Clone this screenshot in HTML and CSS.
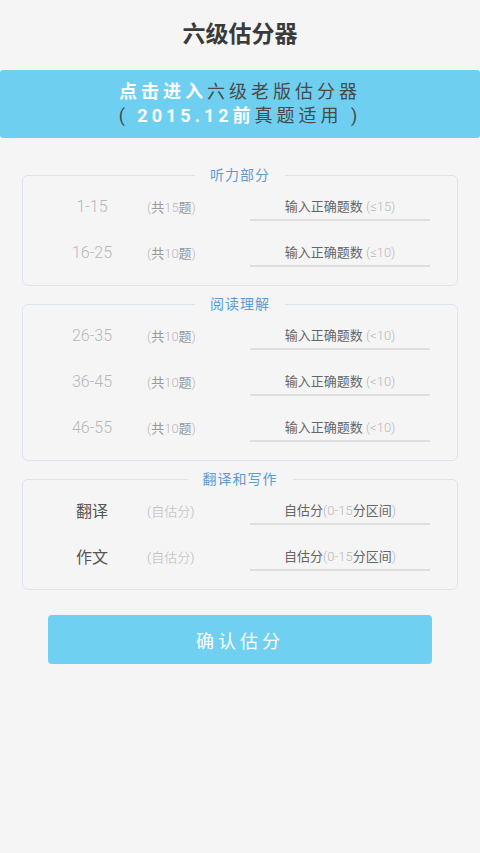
FILE: index.html
```html
<!DOCTYPE html>
<html lang="zh-CN">
<head>
    <meta charset="UTF-8">
    <meta name="viewport" content="width=device-width, initial-scale=1.0">
    <title>六级估分器</title>
    <link rel="stylesheet" href="styles.css">
</head>
<body>
    <header class="title">六级估分器</header>

    <div class="banner">
        <div><span class="hl">点击进入</span>六级老版估分器</div>
        <div>( <span class="hl">2015.12前</span>真题适用 )</div>
    </div>

    <div class="sections">
        <fieldset class="part">
            <legend>听力部分</legend>
            <div class="row">
                <span class="label num">1-15</span>
                <span class="note">(<b>共</b>15<b>题</b>)</span>
                <div class="field">输入正确题数 <span class="hint">(≤15)</span></div>
            </div>
            <div class="row">
                <span class="label num">16-25</span>
                <span class="note">(<b>共</b>10<b>题</b>)</span>
                <div class="field">输入正确题数 <span class="hint">(≤10)</span></div>
            </div>
        </fieldset>

        <fieldset class="part">
            <legend>阅读理解</legend>
            <div class="row">
                <span class="label num">26-35</span>
                <span class="note">(<b>共</b>10<b>题</b>)</span>
                <div class="field">输入正确题数 <span class="hint">(&lt;10)</span></div>
            </div>
            <div class="row">
                <span class="label num">36-45</span>
                <span class="note">(<b>共</b>10<b>题</b>)</span>
                <div class="field">输入正确题数 <span class="hint">(&lt;10)</span></div>
            </div>
            <div class="row">
                <span class="label num">46-55</span>
                <span class="note">(<b>共</b>10<b>题</b>)</span>
                <div class="field">输入正确题数 <span class="hint">(&lt;10)</span></div>
            </div>
        </fieldset>

        <fieldset class="part">
            <legend>翻译和写作</legend>
            <div class="row">
                <span class="label">翻译</span>
                <span class="note">(自估分)</span>
                <div class="field">自估分<span class="hint">(0-15</span>分区间<span class="hint">)</span></div>
            </div>
            <div class="row">
                <span class="label">作文</span>
                <span class="note">(自估分)</span>
                <div class="field">自估分<span class="hint">(0-15</span>分区间<span class="hint">)</span></div>
            </div>
        </fieldset>
    </div>

    <button class="submit">确认估分</button>
</body>
</html>
```

FILE: styles.css
```css
body {
    margin: 0;
    background-color: #f5f5f5;
    font-family: "Roboto", "Noto Sans CJK SC", sans-serif;
    color: #333;
}

.title {
    height: 70px;
    line-height: 70px;
    text-align: center;
    font-size: 23px;
    font-weight: bold;
    color: #3a3a3a;
}

/* blue banner */
.banner {
    background-color: #6ecff1;
    border-radius: 3px;
    padding: 10px 0;
    text-align: center;
    font-size: 18px;
    line-height: 24px;
    letter-spacing: 4px;
    color: #4a4a4a;
}

.banner .hl {
    color: #fff;
    font-weight: bold;
}

.sections {
    padding: 0 22px;
    margin-top: 29px;
}

.part {
    margin: 0 0 10px;
    padding: 0 0 10px;
    border: 1px solid #dce3ec;
    border-radius: 6px;
    min-width: 0;
}

.part legend {
    margin: 0 auto;
    padding: 0 15px;
    font-size: 14px;
    line-height: 16px;
    color: #5d9bd3;
    letter-spacing: 1px;
}

.row {
    display: flex;
    align-items: center;
    height: 46px;
}

.label {
    width: 80px;
    margin-left: 29px;
    text-align: center;
    font-size: 16px;
    color: #555;
}

.label.num {
    font-weight: 300;
    color: #b8b8b8;
}

.note {
    margin-left: 15px;
    width: 103px;
    font-size: 13px;
    font-weight: 300;
    color: #b8b8b8;
}

.note b {
    font-weight: normal;
    color: #999;
}

.field {
    width: 180px;
    margin-top: 6px;
    line-height: 20px;
    padding-bottom: 2px;
    border-bottom: 2px solid #dedede;
    text-align: center;
    font-size: 13px;
    color: #666;
}

.hint {
    font-weight: 300;
    color: #b8b8b8;
}

.submit {
    display: block;
    width: 384px;
    height: 49px;
    margin: 25px auto 0;
    border: none;
    border-radius: 4px;
    background-color: #70d0f1;
    color: #fff;
    font-family: "Noto Sans CJK SC", sans-serif;
    font-size: 18px;
    letter-spacing: 4px;
}
```
